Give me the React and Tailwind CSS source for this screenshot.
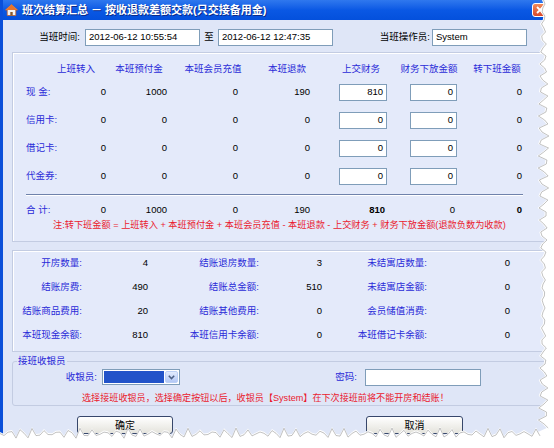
import React from 'react'

const cashRows = [
  { label: '现 金:', v: ['0', '1000', '0', '190'], up: '810', down: '0', next: '0' },
  { label: '信用卡:', v: ['0', '0', '0', '0'], up: '0', down: '0', next: '0' },
  { label: '借记卡:', v: ['0', '0', '0', '0'], up: '0', down: '0', next: '0' },
  { label: '代金券:', v: ['0', '0', '0', '0'], up: '0', down: '0', next: '0' },
]

const summary = [
  ['开房数量:', '4', '结账退房数量:', '3', '未结寓店数量:', '0'],
  ['结账房费:', '490', '结账总金额:', '510', '未结寓店金额:', '0'],
  ['结账商品费用:', '20', '结账其他费用:', '0', '会员储值消费:', '0'],
  ['本班现金余额:', '810', '本班信用卡余额:', '0', '本班借记卡余额:', '0'],
]

const Input = ({ value, className = '' }) => (
  <div className={`h-[17px] bg-white border border-[#7f9db9] flex items-center text-[9.5px] text-black ${className}`}>
    {value}
  </div>
)

// jagged "torn paper" edges drawn over the window
const tearRight = () => {
  const pts = []
  for (let i = 0; i <= 112; i++) {
    const y = i * 4
    const x = 542 + 3.5 * Math.sin(i * 1.9) + 2 * Math.sin(i * 4.3)
    pts.push(`${x.toFixed(1)},${y}`)
  }
  return pts
}
const tearBottom = () => {
  const pts = []
  for (let i = 0; i <= 139; i++) {
    const x = i * 4
    const y = 432 + 3.5 * Math.sin(i * 2.1) + 2 * Math.sin(i * 3.7)
    pts.push(`${x},${y.toFixed(1)}`)
  }
  return pts
}

const Head = ({ w, children }) => (
  <span className={`${w} flex justify-center whitespace-nowrap`}>{children}</span>
)

const App = () => {
  const rp = tearRight()
  const bp = tearBottom()

  return (
    <div className="relative w-[554px] h-[448px] overflow-hidden bg-white font-['Liberation_Sans','Noto_Sans_CJK_SC',sans-serif]">
      <div className="w-[560px] h-[448px] bg-[#dfe6f7] border-l-[3px] border-[#0a4fd9] flex flex-col">
        {/* title bar */}
        <div className="h-[20px] shrink-0 bg-gradient-to-b from-[#2f78ee] via-[#0a58e4] to-[#0450dc] flex items-center">
          <svg width="13" height="12" viewBox="0 0 13 12" className="ml-[2px]">
            <path d="M6.5 0.5 L12.5 6 L10.8 6 L10.8 11.5 L2.2 11.5 L2.2 6 L0.5 6 Z" fill="#f4f4f4" stroke="#c0602a" strokeWidth="0.8" />
            <path d="M6.5 0.5 L12.5 6 L0.5 6 Z" fill="#e8742c" />
            <rect x="5.3" y="8" width="2.4" height="3.5" fill="#8a5a2a" />
          </svg>
          <span className="ml-[4px] text-white font-bold text-[11px] [text-shadow:1px_1px_0_#0a2a8a]">
            班次结算汇总 － 按收退款差额交款(只交接备用金)
          </span>
          <div className="ml-auto mr-[13px] w-[15px] h-[14px] rounded-[3px] bg-gradient-to-b from-[#f08a5a] to-[#d8462a] border border-white flex items-center justify-center">
            <svg width="8" height="8" viewBox="0 0 8 8">
              <path d="M1 1 L7 7 M7 1 L1 7" stroke="white" strokeWidth="1.8" />
            </svg>
          </div>
        </div>

        {/* shift time row */}
        <div className="mt-[9px] h-[17px] flex items-center text-[9.5px]">
          <span className="w-[77px] text-right text-black">当班时间:</span>
          <Input value="2012-06-12 10:55:54" className="ml-[5px] w-[115px] pl-[3px]" />
          <span className="w-[18px] text-center text-black">至</span>
          <Input value="2012-06-12 12:47:35" className="w-[115px] pl-[3px]" />
          <span className="w-[97px] text-right text-black">当班操作员:</span>
          <Input value="System" className="ml-[2px] w-[95px] pl-[3px]" />
        </div>

        {/* money panel */}
        <div className="mt-[6px] ml-[9px] w-[540px] h-[190px] shrink-0 bg-[#e4eafa] border border-[#c3cce2] shadow-[inset_1px_1px_0_#ffffff]">
          <div className="mt-[8px] h-[17px] flex items-center pl-[32px] text-[9.5px] text-[#2a2ad8]">
            <Head w="w-[62px]">上班转入</Head>
            <Head w="w-[64px]">本班预付金</Head>
            <Head w="w-[84px]">本班会员充值</Head>
            <Head w="w-[64px]">本班退款</Head>
            <Head w="w-[84px]">上交财务</Head>
            <Head w="w-[52px]">财务下放金额</Head>
            <Head w="w-[84px]">转下班金额</Head>
          </div>
          {cashRows.map((r, i) => (
            <div key={i} className="h-[28px] flex items-center pl-[13px] text-[9.5px]">
              <span className="w-[36px] text-[#2a2ad8] whitespace-pre">{r.label}</span>
              <span className="w-[44px] text-right">{r.v[0]}</span>
              <span className="w-[61px] text-right">{r.v[1]}</span>
              <span className="w-[71px] text-right">{r.v[2]}</span>
              <span className="w-[72px] text-right">{r.v[3]}</span>
              <Input value={r.up} className="ml-[29px] w-[48px] justify-end pr-[3px]" />
              <Input value={r.down} className="ml-[23px] w-[47px] justify-end pr-[3px]" />
              <span className="w-[65px] text-right">{r.next}</span>
            </div>
          ))}
          <div className="mt-[4px] ml-[13px] w-[497px] h-[2px] border-t border-[#6f82ab] border-b border-b-white" />
          <div className="mt-[5px] h-[18px] flex items-center pl-[13px] text-[9.5px]">
            <span className="w-[36px] text-[#2a2ad8] whitespace-pre">合 计:</span>
            <span className="w-[44px] text-right">0</span>
            <span className="w-[61px] text-right">1000</span>
            <span className="w-[71px] text-right">0</span>
            <span className="w-[72px] text-right">190</span>
            <span className="ml-[29px] w-[48px] text-right pr-[2px] font-bold">810</span>
            <span className="ml-[23px] w-[47px] text-right pr-[2px]">0</span>
            <span className="w-[65px] text-right font-bold">0</span>
          </div>
          <div className="h-[14px] flex items-center pl-[40px] text-[9.2px] text-[#ea1a2e] whitespace-nowrap">
            注:转下班金额 = 上班转入 + 本班预付金 + 本班会员充值 - 本班退款 - 上交财务 + 财务下放金额(退款负数为收款)
          </div>
        </div>

        {/* summary panel */}
        <div className="mt-[8px] ml-[9px] w-[540px] h-[102px] shrink-0 bg-[#e4eafa] border border-[#c3cce2] shadow-[inset_1px_1px_0_#ffffff]">
          {summary.map((r, i) => (
            <div key={i} className="h-[24px] flex items-center text-[9.5px]">
              <span className="w-[69px] text-right text-[#2a2ad8]">{r[0]}</span>
              <span className="w-[66px] text-right">{r[1]}</span>
              <span className="w-[111px] text-right text-[#2a2ad8]">{r[2]}</span>
              <span className="w-[63px] text-right">{r[3]}</span>
              <span className="w-[105px] text-right text-[#2a2ad8]">{r[4]}</span>
              <span className="w-[83px] text-right">{r[5]}</span>
            </div>
          ))}
        </div>

        {/* next cashier group box */}
        <fieldset className="mt-[3px] ml-[9px] w-[540px] shrink-0 border border-[#c3cce2] rounded-[3px] p-0 m-0">
          <legend className="ml-[4px] px-[1px] text-[9.5px] leading-[12px] text-[#2a2ad8]">接班收银员</legend>
          <div className="mt-[2px] h-[16px] flex items-center text-[9.5px]">
            <span className="w-[84px] text-right text-[#2a2ad8]">收银员:</span>
            <div className="ml-[5px] w-[78px] h-[16px] bg-white border border-[#7f9db9] flex items-stretch p-[1px]">
              <div className="flex-1 bg-[#2253c9]" />
              <div className="w-[13px] ml-[1px] rounded-[2px] bg-gradient-to-b from-[#e2ebfd] to-[#b4c8f5] border border-[#bcd0f6] flex items-center justify-center">
                <svg width="7" height="5" viewBox="0 0 7 5">
                  <path d="M0.8 0.8 L3.5 3.6 L6.2 0.8" fill="none" stroke="#4d6185" strokeWidth="1.5" />
                </svg>
              </div>
            </div>
            <span className="w-[177px] text-right text-[#2a2ad8]">密码:</span>
            <Input value="" className="ml-[8px] w-[116px]" />
          </div>
          <div className="mt-[8px] h-[12px] flex items-center pl-[69px] text-[9.1px] text-[#ea1a2e] whitespace-nowrap">
            选择接班收银员，选择确定按钮以后，收银员【System】在下次接班前将不能开房和结账！
          </div>
        </fieldset>

        {/* buttons */}
        <div className="mt-[10px] flex">
          <button className="ml-[74px] w-[96px] h-[18px] rounded-[3px] border border-[#37476b] bg-gradient-to-b from-white to-[#e4e3dc] text-[10px] text-black">
            确定
          </button>
          <button className="ml-[193px] w-[97px] h-[18px] rounded-[3px] border border-[#37476b] bg-gradient-to-b from-white to-[#e4e3dc] text-[10px] text-black">
            取消
          </button>
        </div>
      </div>

      {/* torn edges */}
      <svg className="absolute inset-0 pointer-events-none" width="554" height="448">
        <polygon points={`554,0 ${rp.join(' ')} 554,448`} fill="white" />
        <polygon points={`0,448 ${bp.join(' ')} 554,448`} fill="white" />
        <polyline points={rp.slice(0, 108).join(' ')} fill="none" stroke="#9a9a9a" strokeWidth="1" transform="translate(1.5,0)" opacity="0.6" />
        <polyline points={bp.slice(0, 136).join(' ')} fill="none" stroke="#9a9a9a" strokeWidth="1" transform="translate(0,1.5)" opacity="0.6" />
      </svg>
    </div>
  )
}

export default App
